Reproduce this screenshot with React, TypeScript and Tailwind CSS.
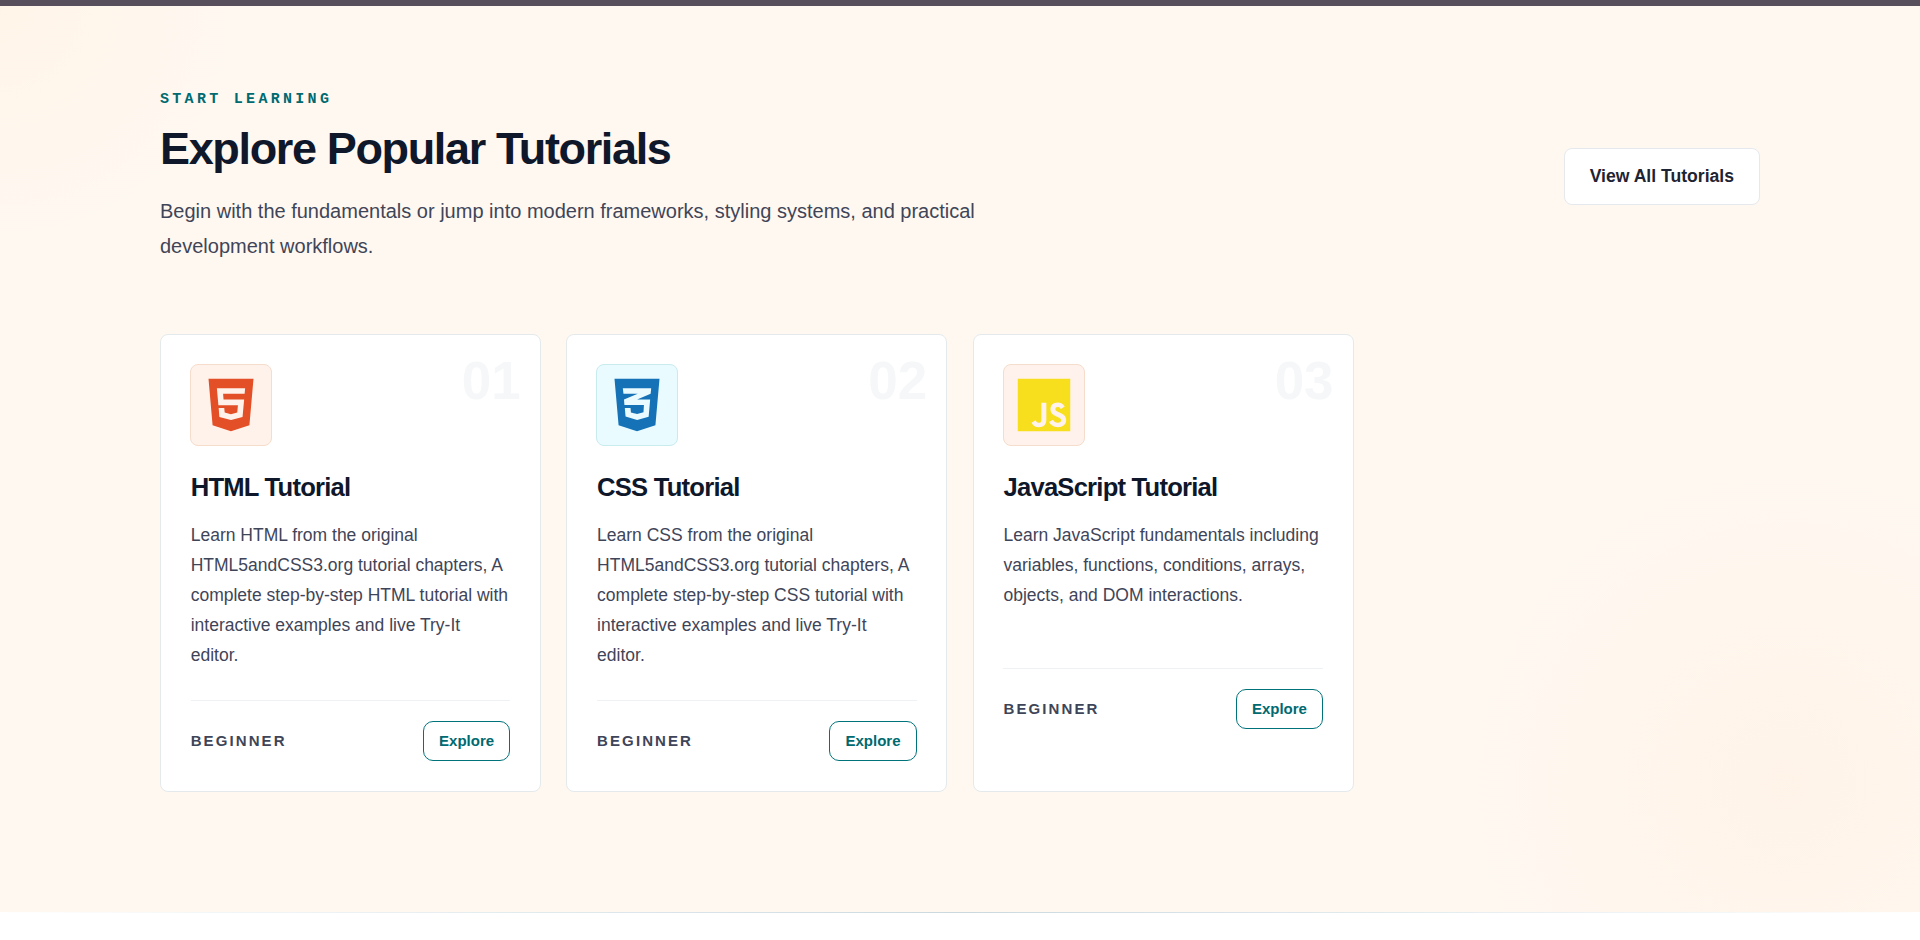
import { FaCss3Alt, FaHtml5, FaJs } from "react-icons/fa";

const tutorials = [
  {
    number: "01",
    title: "HTML Tutorial",
    text: "Learn HTML from the original HTML5andCSS3.org tutorial chapters, A complete step-by-step HTML tutorial with interactive examples and live Try-It editor.",
    level: "Beginner",
    icon: <FaHtml5 size={60} className="text-[#e34f26]" />,
    box: "bg-[#fff2eb] border-[#f6dccb]",
  },
  {
    number: "02",
    title: "CSS Tutorial",
    text: "Learn CSS from the original HTML5andCSS3.org tutorial chapters, A complete step-by-step CSS tutorial with interactive examples and live Try-It editor.",
    level: "Beginner",
    icon: <FaCss3Alt size={60} className="text-[#1572b6]" />,
    box: "bg-[#e9fbff] border-[#c8ebee]",
  },
  {
    number: "03",
    title: "JavaScript Tutorial",
    text: "Learn JavaScript fundamentals including variables, functions, conditions, arrays, objects, and DOM interactions.",
    level: "Beginner",
    icon: <FaJs size={60} className="text-[#f7df1e]" />,
    box: "bg-[#fff2ec] border-[#f6dccb]",
  },
];

export default function App() {
  return (
    <div className="h-[940px] overflow-hidden bg-white font-['Liberation_Sans',Arial,sans-serif]">
      <div className="h-1.5 bg-[#574f5b]" />
      <section className="h-[906px] bg-[#fff8f1] bg-[radial-gradient(circle_at_0%_0%,rgba(255,237,213,0.3),transparent_240px),radial-gradient(circle_at_93%_86%,rgba(255,238,222,0.45),transparent_320px)] px-40 pt-[83px]">
        <div className="flex items-center justify-between">
          <div className="max-w-[830px]">
            <p className="font-['Liberation_Mono',monospace] text-[15px] leading-[22px] font-bold tracking-[0.22em] text-[#006a70] uppercase">
              Start Learning
            </p>
            <h2 className="mt-3 text-[45px] leading-[52px] font-bold tracking-[-0.03em] text-[#0f172a]">
              Explore Popular Tutorials
            </h2>
            <p className="mt-[19px] text-xl leading-[35px] text-[#3f4558]">
              Begin with the fundamentals or jump into modern frameworks,
              styling systems, and practical development workflows.
            </p>
          </div>
          <a
            href="#"
            className="rounded-lg border border-[#e5e9ee] bg-white px-[25px] py-[14px] text-[17.6px] leading-[27px] font-bold text-[#1e2433]"
          >
            View All Tutorials
          </a>
        </div>

        <div className="mt-[70px] grid grid-cols-4 gap-[25.6px]">
          {tutorials.map((item) => (
            <article
              key={item.number}
              className="relative h-[458px] rounded-lg border border-[#e4eaec] bg-white px-[29.7px] py-[29.4px]"
            >
              <span className="absolute top-[19px] right-[19px] text-[53px] leading-none font-bold text-[#f5f7f8]">
                {item.number}
              </span>
              <div
                className={`-ml-[0.7px] flex size-[82px] items-center justify-center rounded-lg border ${item.box}`}
              >
                {item.icon}
              </div>
              <h3 className="mt-[23px] text-[25.6px] leading-9 font-bold tracking-[-0.03em] text-[#0f172a]">
                {item.title}
              </h3>
              <p className="mt-[15px] min-h-[118px] text-[17.5px] leading-[30px] text-[#3f4558]">
                {item.text}
              </p>
              <div className="mt-[30px] flex items-center justify-between border-t border-[#eff2f4] pt-5">
                <span className="text-[15px] font-bold tracking-[0.14em] text-[#3f4558] uppercase">
                  {item.level}
                </span>
                <a
                  href="#"
                  className="rounded-[10px] border border-[#00737a] px-[15px] py-[7px] text-[15px] leading-6 font-bold text-[#006a70]"
                >
                  Explore
                </a>
              </div>
            </article>
          ))}
        </div>
      </section>
      <div className="h-px bg-linear-to-r from-transparent via-[#cbd9df] to-transparent" />
    </div>
  );
}
